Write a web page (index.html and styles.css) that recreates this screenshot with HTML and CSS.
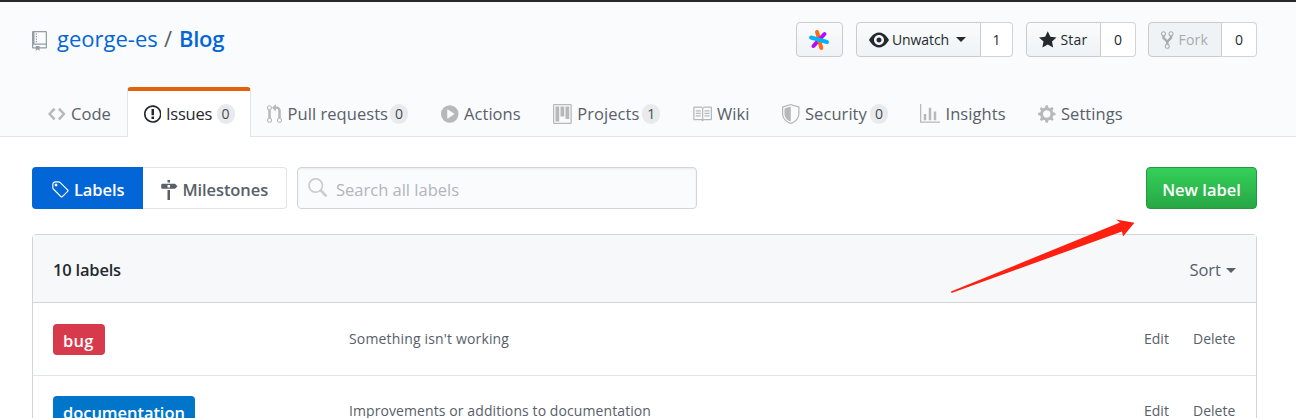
FILE: index.html
```html
<!DOCTYPE html>
<html lang="en">
<head>
<meta charset="utf-8">
<title>Labels · george-es/Blog</title>
<link rel="stylesheet" href="styles.css">
</head>
<body>
<header class="repo-head">
  <div class="title-row">
    <svg class="icon repo-icon" width="15" height="20" viewBox="0 0 12 16"><path fill-rule="evenodd" d="M4 9H3V8h1v1zm0-3H3v1h1V6zm0-2H3v1h1V4zm0-2H3v1h1V2zm8-1v12c0 .55-.45 1-1 1H6v2l-1.5-1.5L3 16v-2H1c-.55 0-1-.45-1-1V1c0-.55.45-1 1-1h10c.55 0 1 .45 1 1zm-1 10H1v2h2v-1h3v1h5v-2zm0-10H2v9h9V1z"/></svg>
    <h1 class="repo-name"><a class="owner">george-es</a><span class="slash">/</span><a class="name">Blog</a></h1>
    <div class="actions">
      <button class="btn logo-btn"><svg width="22" height="22" viewBox="0 0 22 22" fill="none" stroke-width="4" stroke-linecap="round"><path stroke="#ff6a13" d="M9 3l2.500 8"/><path stroke="#b40aff" d="M16.500 5l-11 12"/><path stroke="#ff6a13" d="M11 11l2.300 8"/><path stroke="#00b4f5" d="M3 8.500l16 4.500"/></svg></button>
      <div class="group watch"><button class="btn"><svg class="icon" width="20" height="20" viewBox="0 0 16 16"><path fill-rule="evenodd" d="M8.060 2C3 2 0 8 0 8s3 6 8.060 6C13 14 16 8 16 8s-3-6-7.940-6zM8 12c-2.200 0-4-1.780-4-4 0-2.200 1.800-4 4-4 2.220 0 4 1.800 4 4 0 2.220-1.780 4-4 4zm2-4c0 1.110-.89 2-2 2-1.110 0-2-.89-2-2 0-1.110.89-2 2-2 1.110 0 2 .89 2 2z"/></svg><span>Unwatch</span><i class="caret"></i></button><a class="count">1</a></div>
      <div class="group star"><button class="btn"><svg class="icon" width="17.500" height="20" viewBox="0 0 14 16"><path d="M14 6l-4.900-.64L7 1 4.900 5.360 0 6l3.600 3.260L2.670 14 7 11.670 11.330 14l-.93-4.740z"/></svg><span>Star</span></button><a class="count">0</a></div>
      <div class="group fork"><button class="btn" disabled><svg class="icon" width="12.500" height="20" viewBox="0 0 10 16"><path fill-rule="evenodd" d="M8 1a1.993 1.993 0 0 0-1 3.720V6L5 8 3 6V4.720A1.993 1.993 0 0 0 2 1a1.993 1.993 0 0 0-1 3.720V6.500l3 3v1.780A1.993 1.993 0 0 0 5 15a1.993 1.993 0 0 0 1-3.720V9.500l3-3V4.720A1.993 1.993 0 0 0 8 1zM2 4.200C1.340 4.200.8 3.650.8 3c0-.65.55-1.200 1.200-1.200.65 0 1.200.55 1.200 1.200 0 .65-.55 1.200-1.200 1.200zm3 10c-.66 0-1.200-.55-1.200-1.200 0-.65.55-1.200 1.200-1.200.65 0 1.200.55 1.200 1.200 0 .65-.55 1.200-1.200 1.200zm3-10c-.66 0-1.200-.55-1.200-1.200 0-.65.55-1.200 1.200-1.200.65 0 1.200.55 1.200 1.200 0 .65-.55 1.200-1.200 1.200z"/></svg><span>Fork</span></button><a class="count">0</a></div>
    </div>
  </div>
  <nav class="tabs">
    <a class="tab t-code"><svg class="icon" width="17.500" height="20" viewBox="0 0 14 16"><path fill-rule="evenodd" d="M9.500 3L8 4.500 11.500 8 8 11.500 9.500 13 14 8 9.500 3zm-5 0L0 8l4.500 5L6 11.500 2.500 8 6 4.500 4.500 3z"/></svg><span>Code</span></a>
    <a class="tab t-issues selected"><svg class="icon" width="17.500" height="20" viewBox="0 0 14 16"><path fill-rule="evenodd" d="M7 2.300c3.140 0 5.700 2.560 5.700 5.700s-2.560 5.700-5.700 5.700A5.710 5.710 0 0 1 1.300 8c0-3.140 2.560-5.700 5.700-5.700zM7 1C3.140 1 0 4.140 0 8s3.140 7 7 7 7-3.140 7-7-3.140-7-7-7zm1 3H6v5h2V4zm0 6H6v2h2v-2z"/></svg><span>Issues</span><b class="counter">0</b></a>
    <a class="tab t-pulls"><svg class="icon" width="15" height="20" viewBox="0 0 12 16"><path fill-rule="evenodd" d="M11 11.280V5c-.03-.78-.34-1.470-.94-2.060C9.460 2.350 8.780 2.030 8 2H7V0L4 3l3 3V4h1c.27.020.48.110.69.310.21.200.3.420.31.690v6.280A1.993 1.993 0 0 0 10 15a1.993 1.993 0 0 0 1-3.720zm-1 2.920c-.66 0-1.200-.55-1.200-1.200 0-.65.55-1.200 1.200-1.200.65 0 1.200.55 1.200 1.200 0 .65-.55 1.200-1.200 1.200zM4 3c0-1.110-.89-2-2-2a1.993 1.993 0 0 0-1 3.720v6.560A1.993 1.993 0 0 0 2 15a1.993 1.993 0 0 0 1-3.720V4.720c.59-.34 1-.98 1-1.720zm-.8 10c0 .66-.55 1.200-1.200 1.200-.65 0-1.200-.55-1.200-1.200 0-.65.55-1.200 1.200-1.200.65 0 1.200.55 1.200 1.200zM2 4.200C1.340 4.200.8 3.650.8 3c0-.65.55-1.200 1.200-1.200.65 0 1.200.55 1.200 1.200 0 .65-.55 1.200-1.200 1.200z"/></svg><span>Pull requests</span><b class="counter">0</b></a>
    <a class="tab t-actions"><svg class="icon" width="17.500" height="20" viewBox="0 0 14 16"><path fill-rule="evenodd" d="M14 8A7 7 0 1 1 0 8a7 7 0 0 1 14 0zm-8.223 3.482l4.599-3.066a.5.5 0 0 0 0-.832L5.777 4.518A.5.500 0 0 0 5 4.934v6.132a.5.500 0 0 0 .777.416z"/></svg><span>Actions</span></a>
    <a class="tab t-projects"><svg class="icon" width="18.750" height="20" viewBox="0 0 15 16"><path fill-rule="evenodd" d="M10 12h3V2h-3v10zm-4-2h3V2H6v8zm-4 4h3V2H2v12zm-1 1h13V1H1v14zM14 0H1a1 1 0 0 0-1 1v14a1 1 0 0 0 1 1h13a1 1 0 0 0 1-1V1a1 1 0 0 0-1-1z"/></svg><span>Projects</span><b class="counter">1</b></a>
    <a class="tab t-wiki"><svg class="icon" width="20" height="20" viewBox="0 0 16 16"><path fill-rule="evenodd" d="M3 5h4v1H3V5zm0 3h4V7H3v1zm0 2h4V9H3v1zm11-5h-4v1h4V5zm0 2h-4v1h4V7zm0 2h-4v1h4V9zm2-6v9c0 .55-.45 1-1 1H9.500l-1 1-1-1H2c-.55 0-1-.45-1-1V3c0-.55.45-1 1-1h5.500l1 1 1-1H15c.55 0 1 .45 1 1zm-8 .5L7.500 3H2v9h6V3.500zm7-.5H9.500l-.5.500V12h6V3z"/></svg><span>Wiki</span></a>
    <a class="tab t-security"><svg class="icon" width="17.500" height="20" viewBox="0 0 14 16"><path fill-rule="evenodd" d="M0 2l7-2 7 2v6.020C14 12.690 8.690 16 7 16c-1.690 0-7-3.310-7-7.980V2zm1 .75L7 1l6 1.750v5.268C13 12.104 8.449 15 7 15c-1.449 0-6-2.896-6-6.982V2.750zm1 .75L7 2v12c-1.207 0-5-2.482-5-5.985V3.500z"/></svg><span>Security</span><b class="counter">0</b></a>
    <a class="tab t-insights"><svg class="icon" width="20" height="20" viewBox="0 0 16 16"><path fill-rule="evenodd" d="M16 14v1H0V0h1v14h15zM5 13H3V8h2v5zm4 0H7V3h2v10zm4 0h-2V6h2v7z"/></svg><span>Insights</span></a>
    <a class="tab t-settings"><svg class="icon" width="17.500" height="20" viewBox="0 0 14 16"><path fill-rule="evenodd" d="M14 8.770v-1.600l-1.940-.64-.45-1.090.88-1.840-1.130-1.130-1.810.91-1.090-.45-.69-1.920h-1.600l-.63 1.940-1.110.45-1.840-.88-1.130 1.130.91 1.810-.45 1.090L0 7.230v1.590l1.940.64.45 1.090-.88 1.840 1.130 1.130 1.810-.91 1.090.45.69 1.920h1.590l.63-1.940 1.110-.45 1.840.88 1.130-1.130-.92-1.810.47-1.090L14 8.750v.02zM7 11c-1.660 0-3-1.340-3-3s1.340-3 3-3 3 1.340 3 3-1.340 3-3 3z"/></svg><span>Settings</span></a>
  </nav>
</header>
<main class="content">
  <div class="toolbar">
    <a class="sub labels"><svg class="icon" width="17.500" height="20" viewBox="0 0 14 16"><path fill-rule="evenodd" d="M7.730 1.730C7.260 1.260 6.620 1 5.960 1H3.500C2.130 1 1 2.130 1 3.500v2.470c0 .66.27 1.300.73 1.770l6.060 6.060c.39.390 1.020.390 1.410 0l4.590-4.590a.996.996 0 0 0 0-1.410L7.730 1.730zM2.380 7.090c-.31-.3-.47-.7-.47-1.130V3.500c0-.88.720-1.590 1.590-1.590h2.470c.42 0 .83.160 1.130.47l6.140 6.130-4.730 4.730-6.130-6.150zM3.010 3h2v2H3V3h.010z"/></svg><span>Labels</span></a><a class="sub miles"><svg class="icon" width="17.500" height="20" viewBox="0 0 14 16"><path fill-rule="evenodd" d="M8 2H6V0h2v2zm4 5H2c-.55 0-1-.45-1-1V4c0-.55.45-1 1-1h10l2 2-2 2zM8 4H6v2h2V4zM6 16h2V8H6v8z"/></svg><span>Milestones</span></a>
    <div class="search"><svg class="icon" width="20" height="20" viewBox="0 0 16 16"><path fill-rule="evenodd" d="M15.700 13.300l-3.810-3.830A5.930 5.930 0 0 0 13 6c0-3.310-2.690-6-6-6S1 2.690 1 6s2.690 6 6 6c1.300 0 2.480-.41 3.470-1.110l3.830 3.810c.19.200.45.300.7.300.25 0 .52-.09.700-.3a.996.996 0 0 0 0-1.410v.010zM7 10.700c-2.590 0-4.700-2.110-4.700-4.700 0-2.590 2.110-4.700 4.700-4.700 2.590 0 4.700 2.110 4.700 4.700 0 2.590-2.110 4.700-4.700 4.700z"/></svg><span>Search all labels</span></div>
    <button class="new-label"><span>New label</span></button>
  </div>
  <section class="box">
    <div class="box-head"><span class="total">10 labels</span><span class="sort"><span>Sort</span><i class="caret"></i></span></div>
    <div class="row"><div class="label-cell"><span class="chip bug"><span>bug</span></span></div><span class="desc d1">Something isn't working</span><a class="edit">Edit</a><a class="delete">Delete</a></div>
    <div class="row"><div class="label-cell"><span class="chip doc"><span>documentation</span></span></div><span class="desc d2">Improvements or additions to documentation</span><a class="edit">Edit</a><a class="delete">Delete</a></div>
  </section>
</main>
<svg class="arrow" width="190" height="80" viewBox="945 215 190 80"><path fill="#ff2012" d="M951 291.500L1120 222.500L1116 219.500L1134.500 222.800L1123 236.500L1122 231.500L951.500 293Z"/></svg>
</body>
</html>
```
FILE: styles.css
```css
* { box-sizing: border-box; }
body {
  margin: 0;
  height: 418px;
  overflow: hidden;
  position: relative;
  background: #fff;
  color: #24292e;
  font: 16.5px/26px "Open Sans", "Noto Sans", sans-serif;
  white-space: nowrap;
}
.icon { fill: currentColor; flex: none; display: block; }
button { font: inherit; color: inherit; padding: 0; margin: 0; }

.repo-head {
  height: 137px;
  border-top: 2px solid #24292e;
  border-bottom: 1px solid #e1e4e8;
  background: #fafbfc;
}
.title-row { display: flex; height: 85px; padding: 20px 39px 0 32px; }
.repo-icon { color: #959da5; margin-top: 9px; }
.repo-name {
  display: flex;
  margin: 1px 0 0 10px;
  font-size: 22px;
  line-height: 30px;
  font-weight: 400;
  color: #586069;
}
.owner { width: 107px; color: #0366d6; }
.slash { width: 15px; }
.name { color: #0366d6; font-weight: 600; letter-spacing: -.3px; }

.actions { display: flex; margin-left: auto; height: 35px; font-size: 14px; font-weight: 500; }
.btn {
  display: flex;
  align-items: center;
  height: 35px;
  border: 1px solid #c8cbcf;
  border-radius: 4px;
  background: linear-gradient(#fafbfc, #eff3f6);
}
.logo-btn { width: 47px; justify-content: center; margin-right: 13px; padding-right: 2px; }
.group { display: flex; }
.group .btn { border-radius: 4px 0 0 4px; padding-left: 12px; }
.group .icon { margin-right: 5px; }
.count {
  flex: 1;
  border: 1px solid #d1d3d5;
  border-left: 0;
  border-radius: 0 4px 4px 0;
  background: #fff;
  text-align: center;
  line-height: 33px;
}
.watch { width: 157px; margin-right: 13px; }
.watch .icon { margin-right: 4px; }
.watch .btn { width: 125px; }
.watch .btn span { width: 64px; text-align: left; margin-left: -1px; letter-spacing: -.1px; }
.star { width: 110px; margin-right: 12px; }
.star .btn { width: 75px; }
.star .btn span { letter-spacing: .15px; }
.star .icon { margin-right: 4px; }
.fork { width: 109px; }
.fork .btn { width: 74px; color: #a7abae; background: #eff3f6; }
.fork .btn span { letter-spacing: .2px; }
.fork .icon { color: #a7abae; }
.caret { border: 5px solid transparent; border-top-color: currentColor; border-bottom: 0; }

.tabs { display: flex; height: 50px; padding-left: 32px; color: #586069; }
.tab { display: flex; flex: none; align-items: center; height: 50px; padding: 4px 0 0 16px; letter-spacing: .06px; }
.tab .icon { color: #b6b8bb; margin-right: 5.5px; }
.counter {
  height: 20px;
  min-width: 17px;
  padding: 0 5px;
  border-radius: 10px;
  background: #e8eaec;
  color: #444d56;
  font-size: 14px;
  line-height: 20px;
  font-weight: 500;
  text-align: center;
}
.tab.selected {
  border: 1px solid #e1e4e8;
  border-top: 4px solid #e36209;
  border-bottom: 0;
  border-radius: 4px 4px 0 0;
  background: #fff;
  color: #24292e;
  padding: 0 0 0 15.5px;
}
.tab.selected .icon { color: #24292e; margin-right: 5px; }
.t-code { width: 95px; }
.t-issues { width: 124px; }
.t-issues span { width: 50.5px; letter-spacing: -.25px; }
.t-pulls { width: 174px; }
.t-pulls span { width: 102.5px; }
.t-actions { width: 112px; }
.t-projects { width: 138.5px; }
.t-projects span { width: 65px; }
.t-wiki { width: 90.5px; }
.t-security { width: 138px; }
.t-security span { width: 65px; }
.t-insights { width: 118px; }

.content { padding: 30px 39px 0 32px; }
.toolbar { display: flex; height: 42px; }
.sub { display: flex; align-items: center; height: 42px; font-weight: 600; letter-spacing: -.1px; padding: 3px 0 0 19px; }
.sub .icon { margin-right: 5.5px; }
.labels { width: 111px; background: #0366d6; color: #fff; border-radius: 4px 0 0 4px; }
.miles { width: 144px; border: 1px solid #e1e4e8; border-left: 0; border-radius: 0 4px 4px 0; color: #586069; padding-left: 17px; }
.miles .icon { margin-right: 5px; }
.search {
  display: flex;
  align-items: center;
  width: 400px;
  margin-left: 10px;
  padding: 3px 0 0 9px;
  border: 1px solid #d1d5da;
  border-radius: 4px;
  background: #fafbfc;
  box-shadow: inset 0 1px 2px rgba(27, 31, 35, .075);
  color: #b0b6bc;
}
.search .icon { color: #c6cbd1; margin: -3px 9px 0 0; }
.new-label {
  width: 111px;
  margin-left: auto;
  border: 1px solid #28983f;
  border-radius: 4px;
  background: linear-gradient(#34d058, #28a745);
  color: #fff;
  font-weight: 600;
  padding-top: 3px;
}

.box { margin-top: 25px; border: 1px solid #d1d5da; border-radius: 4px 4px 0 0; }
.box-head {
  display: flex;
  align-items: center;
  height: 68px;
  padding: 3px 20px 0;
  border-bottom: 1px solid #d1d5da;
  background: #f6f8fa;
}
.total { font-weight: 600; letter-spacing: -.2px; }
.sort { display: flex; align-items: center; margin-left: auto; color: #586069; }
.sort .caret { margin-left: 5px; }
.row {
  display: flex;
  height: 72px;
  padding: 20px 20px 0;
  color: #586069;
  font-size: 14px;
  line-height: 30px;
}
.row + .row { border-top: 1px solid #e1e4e8; }
.row:nth-child(2) { border-top: 0; padding-top: 21px; }
.label-cell { width: 296px; }
.chip { display: flex; height: 31px; border-radius: 4px; color: #fff; font-size: 16.5px; line-height: 32px; font-weight: 600; padding: 1px 0 0 10px; }
.bug { width: 52px; background: #d73a4a; }
.bug span { letter-spacing: .2px; }
.doc { width: 142px; background: #0075ca; }
.doc span { letter-spacing: -.05px; }
.d1 { letter-spacing: .16px; }
.d2 { letter-spacing: .09px; }
.edit { margin-left: auto; width: 49px; }
.delete { width: 43px; }
.arrow { position: absolute; left: 945px; top: 215px; }
```
